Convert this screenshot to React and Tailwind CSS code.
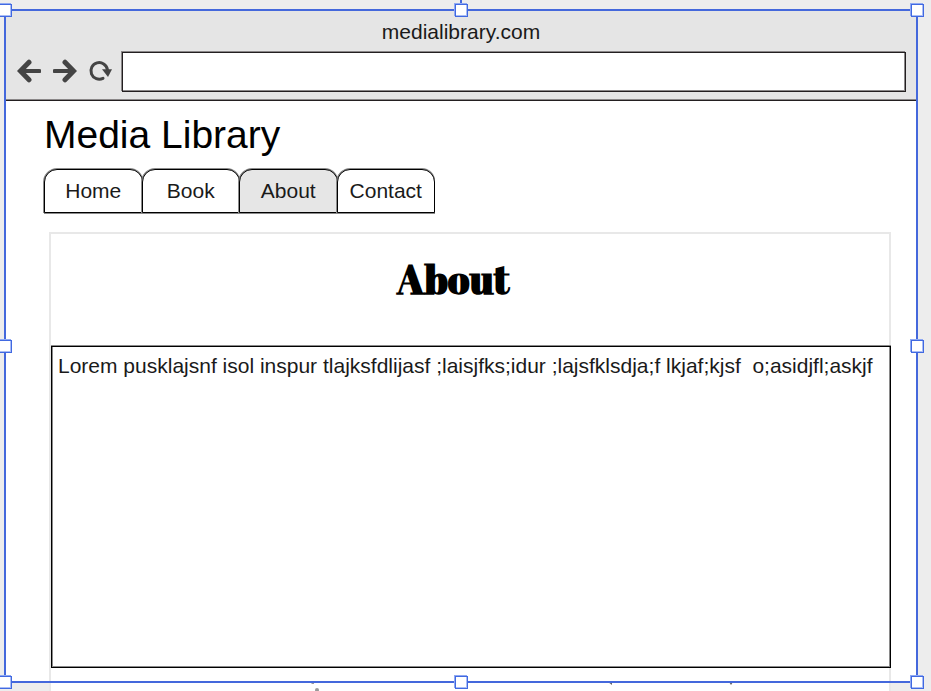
import React from "react";

const TABS = ["Home", "Book", "About", "Contact"];

const HANDLES = [
  "-left-[7px] -top-[7px]",
  "left-1/2 -ml-[6px] -top-[7px]",
  "-right-[8px] -top-[7px]",
  "-left-[7px] top-1/2 -mt-[6px]",
  "-right-[8px] top-1/2 -mt-[6px]",
  "-left-[7px] -bottom-[8px]",
  "left-1/2 -ml-[6px] -bottom-[8px]",
  "-right-[8px] -bottom-[8px]",
];

function ArrowIcon({ className }) {
  return (
    <svg viewBox="0 0 24 24" className={className} fill="none" stroke="#444" strokeLinecap="round" strokeLinejoin="miter" aria-hidden="true">
      <path d="M6 12H22.3" strokeWidth="4.2" />
      <path d="M12 3.2L3.4 12L12 20.8" strokeWidth="5" />
    </svg>
  );
}

function ReloadIcon() {
  return (
    <svg viewBox="0 0 24 24" className="h-6 w-6" aria-hidden="true">
      <path d="M15 19.3A8.3 8.3 0 1 1 19.4 10.5" fill="none" stroke="#444" strokeWidth="3" strokeLinecap="round" />
      <path d="M14 10.2L24 10.2L20 18Z" fill="#444" />
    </svg>
  );
}

function BrowserBar() {
  return (
    <header className="border-b border-[#231f20] bg-[#e5e5e5] pt-3 pb-2 pl-3 pr-3 shadow-[inset_0_-1px_0_#8a8788]">
      <div className="text-center text-[21px] leading-[22px] text-[#1a1a1a]">medialibrary.com</div>
      <div className="mt-[9px] flex items-center">
        <button type="button" aria-label="Back" className="ml-px pb-[2px]">
          <ArrowIcon className="h-6 w-6" />
        </button>
        <button type="button" aria-label="Forward" className="ml-3 pb-[2px]">
          <ArrowIcon className="h-6 w-6 rotate-180" />
        </button>
        <button type="button" aria-label="Reload" className="ml-[11px] pb-[2px]">
          <ReloadIcon />
        </button>
        <input
          type="text"
          aria-label="Address"
          className="ml-[10px] h-10 min-w-0 flex-1 border border-[#231f20] bg-white px-2 text-[21px] shadow-[-1px_-1px_0_#8a8788,inset_-1px_-1px_0_#8a8788] outline-none"
        />
      </div>
    </header>
  );
}

function Selection() {
  return (
    <div className="pointer-events-none absolute inset-0 border-2 border-[#4468dc]">
      <span className="absolute -top-[11px] left-1/2 -ml-px h-[11px] w-[2px] bg-[#4468dc]" />
      {HANDLES.map((place) => (
        <span
          key={place}
          className={`absolute h-[13px] w-[13px] border border-[#4169e1] bg-white shadow-[-1px_-1px_0_#8fa9f3,inset_-1px_-1px_0_#a9bdf6] ${place}`}
        />
      ))}
    </div>
  );
}

export default function App() {
  return (
    <div className="flex min-h-screen flex-col overflow-hidden bg-[#ededed] pt-[9px] pr-[13px] pb-2 pl-1 font-['Liberation_Sans',Arial,sans-serif] text-black">
      <div className="relative flex flex-1 flex-col bg-white">
        <BrowserBar />

        <main className="flex flex-1 flex-col pr-[27px] pl-10">
          <h1 className="mt-3 text-[39px] leading-[44px]">Media Library</h1>

          <nav className="mt-3 flex w-[390px]">
            {TABS.map((tab) => (
              <button
                key={tab}
                type="button"
                aria-current={tab === "About" ? "page" : undefined}
                className={`-mr-px h-[44px] min-w-0 flex-1 rounded-t-[13px] border border-black text-[21px] leading-[24px] text-[#1a1a1a] shadow-[-1px_0_0_#8a8a8a,0_-1px_0_#8a8a8a,0_1px_0_#8a8a8a] ${
                  tab === "About" ? "bg-[#e6e6e6]" : "bg-white"
                }`}
              >
                {tab}
              </button>
            ))}
          </nav>

          <section className="relative mt-[19px] -mb-2 ml-[5px] flex flex-1 flex-col border-x-2 border-t-2 border-[#e8e8e8] bg-white pb-[23px]">
            <h2 className="mt-[23px] mr-[34px] text-center font-['Abril_Fatface','Liberation_Serif',serif] text-[40px] leading-[44px] font-bold">
              About
            </h2>
            <p className="mt-[45px] -mr-[2px] min-h-[200px] flex-1 border border-black bg-white px-[6px] pt-[7px] text-[21px] leading-[24px] whitespace-pre-wrap text-[#1a1a1a] shadow-[0_-1px_0_#8a8a8a,inset_-1px_-1px_0_#8a8a8a,inset_1px_0_0_#8a8a8a]">
              {"Lorem pusklajsnf isol inspur tlajksfdlijasf ;laisjfks;idur ;lajsfklsdja;f lkjaf;kjsf  o;asidjfl;askjf"}
            </p>
            <svg viewBox="0 0 424 9" className="absolute bottom-0 left-[260px] h-[9px] w-[424px]" fill="#999" aria-hidden="true">
              <path d="M0 1h3v1h-2z" />
              <circle cx="6" cy="8" r="2" />
              <path d="M297 0h4v3z" fill="#666" />
              <path d="M418 0h4l-2 3z" fill="#666" />
            </svg>
          </section>
        </main>

        <Selection />
      </div>
    </div>
  );
}
